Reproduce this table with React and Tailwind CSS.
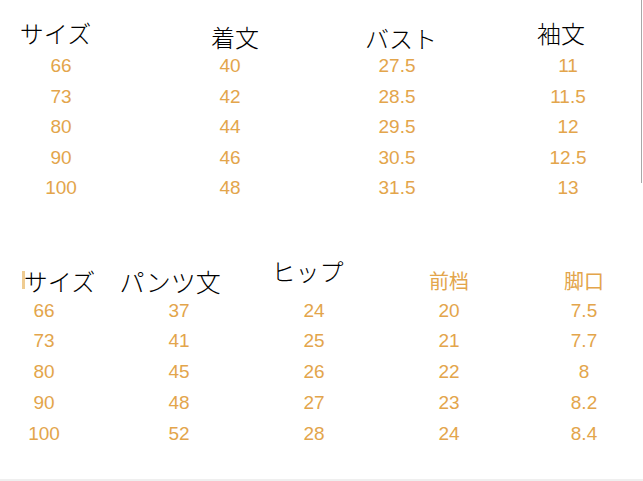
const NUM = "text-[19px] text-[#e3a54b] [font-family:'Liberation_Sans','Noto_Sans_CJK_JP',sans-serif]";
const HEAD = "text-[24px] leading-[24px] font-light text-black whitespace-nowrap [font-family:'Noto_Sans_CJK_JP',sans-serif]";

const top = [
  { head: 'サイズ', hs: 'mr-[11px]', ml: 'ml-[11px]', vals: ['66', '73', '80', '90', '100'] },
  { head: '着文', hs: 'mt-[4px] ml-[10px]', ml: 'ml-[69px]', vals: ['40', '42', '44', '46', '48'] },
  { head: 'バスト', hs: 'mt-[5px] ml-[8px]', ml: 'ml-[67px]', vals: ['27.5', '28.5', '29.5', '30.5', '31.5'] },
  { head: '袖文', hs: 'mr-[14px]', ml: 'ml-[71px]', vals: ['11', '11.5', '12', '12.5', '13'] },
];

const bottom = [
  { head: 'サイズ', hs: 'ml-[31px]', ml: 'ml-[4px]', vals: ['66', '73', '80', '90', '100'] },
  { head: 'パンツ文', hs: 'mr-[18px] text-[25px]', ml: 'ml-[55px]', vals: ['37', '41', '45', '48', '52'] },
  { head: 'ヒップ', hs: 'mr-[13px] -mt-[10px]', ml: 'ml-[55px]', vals: ['24', '25', '26', '27', '28'] },
  { head: '前档', orange: true, hs: 'mt-[2px]', ml: 'ml-[55px]', vals: ['20', '21', '22', '23', '24'] },
  { head: '脚口', orange: true, hs: 'mt-[2px]', ml: 'ml-[55px]', vals: ['7.5', '7.7', '8', '8.2', '8.4'] },
];

function Column({ col, width, headH, rowH }) {
  return (
    <div className={`flex flex-col items-center ${width} ${col.ml}`}>
      <div className={`flex flex-col items-center ${headH}`}>
        {col.orange ? (
          <div className={`text-[20px] leading-[20px] text-[#e3a54b] whitespace-nowrap [font-family:'Noto_Sans_CJK_JP',sans-serif] ${col.hs}`}>
            {col.head}
          </div>
        ) : (
          <div className={`${HEAD} ${col.hs}`}>{col.head}</div>
        )}
      </div>
      {col.vals.map((v, i) => (
        <div key={i} className={`${NUM} ${rowH} flex items-center`}>
          {v}
        </div>
      ))}
    </div>
  );
}

export default function App() {
  return (
    <div className="w-[643px] h-[481px] bg-white relative overflow-hidden">
      {/* faint scan edge on the right */}
      <div className="absolute right-[1px] top-0 w-[1px] h-[183px] bg-[#a8a8a8]" />

      <div className="flex pt-[21px]">
        {top.map((col, i) => (
          <Column key={i} col={col} width="w-[100px]" headH="h-[30px]" rowH="h-[30.5px]" />
        ))}
      </div>

      <div className="flex mt-[65px] relative">
        <div className="absolute left-[22px] top-[2px] w-[3px] h-[18px] bg-[#e8b664] opacity-70" />
        {bottom.map((col, i) => (
          <Column key={i} col={col} width="w-[80px]" headH="h-[27px]" rowH="h-[30.75px]" />
        ))}
      </div>

      <div className="absolute left-0 bottom-0 w-full h-[2px] bg-[#efefef]" />
    </div>
  );
}
